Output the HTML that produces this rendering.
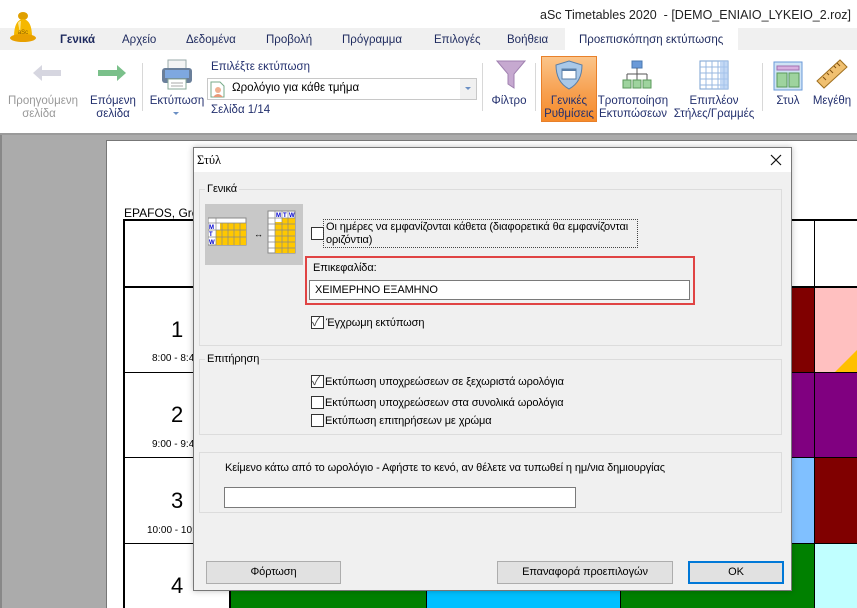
<!DOCTYPE html>
<html><head><meta charset="utf-8"><style>
*{margin:0;padding:0;box-sizing:border-box}
body{width:857px;height:608px;overflow:hidden;position:relative;font-family:"Liberation Sans","Noto Sans CJK SC",sans-serif;background:#fff}
.a{position:absolute;white-space:nowrap}
.rb{color:#23306e;font-size:11.5px;text-align:center;line-height:13px}
.d{font-family:"Liberation Sans Narrow","Liberation Sans",sans-serif;font-size:11px;letter-spacing:-0.1px;color:#000}
.cb{position:absolute;width:13px;height:13px;border:1px solid #333;background:#fff}
.grp{position:absolute;border:1px solid #dcdcdc}
.btn{position:absolute;background:#e1e1e1;border:1px solid #adadad;text-align:center;line-height:20px}
.hl{position:absolute;background:#000}
</style></head><body>
<!-- title bar -->
<div class="a" style="left:0;top:0;width:857px;height:28px;background:#fff"></div>
<div class="a" style="left:540px;top:8px;font-size:12.5px;color:#222">aSc Timetables 2020&nbsp; - [DEMO_ENIAIO_LYKEIO_2.roz]</div>
<!-- tabs -->
<div class="a" style="left:0;top:28px;width:857px;height:22px;background:#f0f0f0"></div>
<div class="a" style="left:565px;top:28px;width:173px;height:23px;background:#fff"></div>
<svg class="a" style="left:8px;top:11px" width="30" height="32" viewBox="0 0 30 32"><ellipse cx="15" cy="5" rx="5" ry="4" fill="#e0a000"/><path d="M6 26 Q6 9 15 8 Q24 9 24 26 Z" fill="#f5b800"/><ellipse cx="15" cy="27" rx="13" ry="4" fill="#e8a000"/><path d="M10 12 Q11 10 13 10 L12 22 Z" fill="#fde58a"/><text x="15" y="23" font-size="6" text-anchor="middle" fill="#8a5a00">aSc</text></svg>
<div class="a" style="top:34px;font-size:11.5px;color:#1e2a5e;left:60px;font-weight:bold">Γενικά</div>
<div class="a" style="top:34px;font-size:11.5px;color:#1e2a5e;left:122px">Αρχείο</div>
<div class="a" style="top:34px;font-size:11.5px;color:#1e2a5e;left:186px">Δεδομένα</div>
<div class="a" style="top:34px;font-size:11.5px;color:#1e2a5e;left:266px">Προβολή</div>
<div class="a" style="top:34px;font-size:11.5px;color:#1e2a5e;left:342px">Πρόγραμμα</div>
<div class="a" style="top:34px;font-size:11.5px;color:#1e2a5e;left:434px">Επιλογές</div>
<div class="a" style="top:34px;font-size:11.5px;color:#1e2a5e;left:507px">Βοήθεια</div>
<div class="a" style="top:34px;font-size:11.5px;color:#1e2a5e;left:579px">Προεπισκόπηση εκτύπωσης</div>
<!-- ribbon -->
<svg class="a" style="left:32px;top:64px" width="30" height="18"><path d="M1 9 L10 1 L10 6 L29 6 L29 12 L10 12 L10 17 Z" fill="#d6d6e0"/></svg>
<div class="a rb" style="left:8px;top:95px;width:62px;color:#999">Προηγούμενη<br>σελίδα</div>
<svg class="a" style="left:97px;top:64px" width="30" height="18"><path d="M29 9 L20 1 L20 6 L1 6 L1 12 L20 12 L20 17 Z" fill="#7ac08a"/></svg>
<div class="a rb" style="left:86px;top:95px;width:54px">Επόμενη<br>σελίδα</div>
<div class="a" style="left:142px;top:63px;width:1px;height:48px;background:#d8d8d8"></div>
<svg class="a" style="left:161px;top:59px" width="32" height="32"><rect x="7" y="1" width="18" height="10" fill="#f4f4f4" stroke="#9aa" /><rect x="1" y="9" width="30" height="15" rx="3" fill="#6a7f9a"/><rect x="4" y="11" width="24" height="8" fill="#7ea8e0"/><rect x="7" y="20" width="18" height="10" fill="#fff" stroke="#8a9"/><line x1="10" y1="24" x2="22" y2="24" stroke="#aaa"/><line x1="10" y1="27" x2="22" y2="27" stroke="#aaa"/></svg>
<div class="a rb" style="left:148px;top:95px;width:58px">Εκτύπωση</div>
<div class="a" style="left:173px;top:112px;border:3px solid transparent;border-top:3px solid #6b8fc4"></div>
<div class="a" style="left:211px;top:61px;font-size:11.5px;color:#23306e">Επιλέξτε εκτύπωση</div>
<div class="a" style="left:207px;top:78px;width:270px;height:22px;border:1px solid #c8c8c8;background:#fff"></div>
<div class="a" style="left:460px;top:79px;width:16px;height:20px;background:#f0f0f0"></div>
<div class="a" style="left:465px;top:87px;border:3px solid transparent;border-top:3px solid #6b8fc4"></div>
<svg class="a" style="left:210px;top:81px" width="16" height="17"><path d="M1 1 H10 L14 5 V16 H1 Z" fill="#fff" stroke="#7a8"/><circle cx="8" cy="9" r="3" fill="#f0b090"/><path d="M3 16 Q8 10 13 16Z" fill="#e89878"/></svg>
<div class="a" style="left:232px;top:82px;font-size:11.5px;color:#000">Ωρολόγιο για κάθε τμήμα</div>
<div class="a" style="left:211px;top:104px;font-size:11.5px;color:#23306e">Σελίδα 1/14</div>
<div class="a" style="left:482px;top:63px;width:1px;height:48px;background:#d8d8d8"></div>
<svg class="a" style="left:496px;top:60px" width="30" height="30"><path d="M1 1 H29 L18 14 V28 L12 24 V14 Z" fill="#c6a9d0" stroke="#a080b0"/></svg>
<div class="a rb" style="left:489px;top:95px;width:40px">Φίλτρο</div>
<div class="a" style="left:535px;top:63px;width:1px;height:48px;background:#d8d8d8"></div>
<div class="a" style="left:541px;top:56px;width:56px;height:66px;background:linear-gradient(#fbc58a,#f7a050 55%,#f68b2a);border:1px solid #e8802a"></div>
<svg class="a" style="left:554px;top:60px" width="30" height="30"><path d="M15 1 L28 5 Q28 22 15 29 Q2 22 2 5 Z" fill="#a9c8e8" stroke="#5a7fa8"/><rect x="8" y="9" width="14" height="10" fill="#fff" stroke="#5a7fa8"/><rect x="8" y="9" width="14" height="2" fill="#5a7fa8"/></svg>
<div class="a rb" style="left:541px;top:95px;width:56px">Γενικές<br>Ρυθμίσεις</div>
<svg class="a" style="left:622px;top:60px" width="30" height="30"><rect x="10" y="1" width="10" height="7" fill="#6a9ad8" stroke="#4a78b0"/><path d="M15 8 V14 M5 14 H25 M5 14 V20 M15 14 V20 M25 14 V20" stroke="#555" fill="none"/><rect x="1" y="20" width="8" height="8" fill="#9ed39e" stroke="#5a9a5a"/><rect x="11" y="20" width="8" height="8" fill="#9ed39e" stroke="#5a9a5a"/><rect x="21" y="20" width="8" height="8" fill="#9ed39e" stroke="#5a9a5a"/></svg>
<div class="a rb" style="left:597px;top:95px;width:72px">Τροποποίηση<br>Εκτυπώσεων</div>
<svg class="a" style="left:699px;top:60px" width="30" height="30"><rect x="1" y="1" width="28" height="28" fill="#fff" stroke="#7aa0d0"/><path d="M1 7H29M1 13H29M1 19H29M1 25H29M7 1V29M13 1V29M19 1V29M25 1V29" stroke="#9ab8e0"/><rect x="21" y="1" width="8" height="28" fill="#a9c8f0" opacity=".7"/></svg>
<div class="a rb" style="left:670px;top:95px;width:88px">Επιπλέον<br>Στήλες/Γραμμές</div>
<div class="a" style="left:762px;top:63px;width:1px;height:48px;background:#d8d8d8"></div>
<svg class="a" style="left:773px;top:61px" width="30" height="30"><rect x="1" y="1" width="28" height="28" fill="#cfe3f5" stroke="#6a9ad8"/><rect x="4" y="5" width="22" height="4" fill="#d8b0e0" stroke="#a070b0"/><rect x="4" y="12" width="10" height="14" fill="#9ed39e" stroke="#5a9a5a"/><rect x="16" y="12" width="10" height="14" fill="#9ed39e" stroke="#5a9a5a"/></svg>
<div class="a rb" style="left:772px;top:95px;width:32px">Στυλ</div>
<svg class="a" style="left:815px;top:59px" width="34" height="32"><path d="M2 22 L25 1 L32 8 L9 29 Z" fill="#f0c070" stroke="#a07020"/><path d="M8 18l3 3M12 14l2 2M15 11l3 3M19 7l2 2M22 4l3 3" stroke="#805010"/></svg>
<div class="a rb" style="left:808px;top:95px;width:48px">Μεγέθη</div>
<div class="a" style="left:0;top:133px;width:857px;height:2px;background:#9a9a9a"></div>
<!-- workspace -->
<div class="a" style="left:0;top:135px;width:857px;height:473px;background:#ababab"></div>
<div class="a" style="left:0;top:135px;width:2px;height:473px;background:#888"></div>
<div class="a" style="left:106px;top:140px;width:751px;height:468px;background:#fff;border-left:1px solid #777;border-top:1px solid #777"></div>
<div class="a" style="left:124px;top:206px;font-size:12px;color:#000">EPAFOS, Gre</div>
<div class="hl" style="left:123px;top:219px;width:734px;height:2px"></div>
<div class="hl" style="left:123px;top:219px;width:2px;height:389px"></div>
<div class="hl" style="left:229px;top:219px;width:2px;height:389px"></div>
<div class="hl" style="left:123px;top:286px;width:734px;height:2px"></div>
<div class="hl" style="left:123px;top:372px;width:734px;height:1px"></div>
<div class="hl" style="left:123px;top:457px;width:734px;height:1px"></div>
<div class="hl" style="left:123px;top:543px;width:734px;height:1px"></div>
<div class="a" style="left:171px;top:317px;font-size:22px">1</div>
<div class="a" style="left:152px;top:353px;font-size:10px">8:00 - 8:45</div>
<div class="a" style="left:171px;top:402px;font-size:22px">2</div>
<div class="a" style="left:152px;top:439px;font-size:10px">9:00 - 9:45</div>
<div class="a" style="left:171px;top:488px;font-size:22px">3</div>
<div class="a" style="left:147px;top:525px;font-size:10px">10:00 - 10:45</div>
<div class="a" style="left:171px;top:573px;font-size:22px">4</div>
<!-- right colored cells -->
<div class="a" style="left:791px;top:288px;width:23px;height:84px;background:#800000"></div>
<div class="a" style="left:815px;top:288px;width:42px;height:84px;background:#ffc0c0"></div>
<svg class="a" style="left:835px;top:350px" width="22" height="22"><path d="M22 0 V22 H0 Z" fill="#ffc000"/></svg>
<div class="a" style="left:791px;top:373px;width:23px;height:84px;background:#800080"></div>
<div class="a" style="left:815px;top:373px;width:42px;height:84px;background:#800080"></div>
<div class="a" style="left:791px;top:458px;width:23px;height:85px;background:#80c0ff"></div>
<div class="a" style="left:815px;top:458px;width:42px;height:85px;background:#800000"></div>
<div class="hl" style="left:814px;top:219px;width:1px;height:389px"></div>
<div class="a" style="left:231px;top:544px;width:195px;height:64px;background:#008000"></div>
<div class="a" style="left:426px;top:544px;width:1px;height:64px;background:#000"></div>
<div class="a" style="left:427px;top:544px;width:193px;height:64px;background:#00c0ff"></div>
<div class="a" style="left:620px;top:544px;width:1px;height:64px;background:#000"></div>
<div class="a" style="left:621px;top:544px;width:193px;height:64px;background:#008000"></div>
<div class="a" style="left:815px;top:544px;width:42px;height:64px;background:#c0ffff"></div>
<!-- dialog -->
<div class="a" style="left:193px;top:147px;width:599px;height:444px;background:#f0f0f0;border:1px solid #777;box-shadow:0 0 6px rgba(0,0,0,.25)"></div>
<div class="a" style="left:194px;top:148px;width:597px;height:24px;background:#fff"></div>
<div class="a d" style="left:197px;top:153px;font-family:'Liberation Serif',serif;font-size:12.5px">Στύλ</div>
<svg class="a" style="left:770px;top:154px" width="12" height="12"><path d="M1 1L11 11M11 1L1 11" stroke="#111" stroke-width="1.2"/></svg>
<div class="grp" style="left:199px;top:189px;width:583px;height:157px"></div>
<div class="a d" style="left:205px;top:183px;background:#f0f0f0;padding:0 2px">Γενικά</div>
<div class="a" style="left:205px;top:204px;width:98px;height:61px;background:#c8c8c8"></div>
<svg class="a" style="left:208px;top:209px" width="92" height="46">
<g transform="translate(0,9)"><rect x="0" y="0" width="38" height="27" fill="#fff" stroke="#888"/>
<rect x="8" y="5" width="30" height="22" fill="#ffc800"/><rect x="8" y="5" width="4" height="7" fill="#fff"/>
<path d="M0 5H38M0 12H38M0 19H38M8 0V27M14 5V27M20 5V27M26 5V27M32 5V27" stroke="#888" stroke-width=".7"/>
<text x="1" y="11" font-size="6" fill="#00c" font-weight="bold">M</text><text x="1" y="18" font-size="6" fill="#00c" font-weight="bold">T</text><text x="1" y="26" font-size="6" fill="#00c" font-weight="bold">W</text></g>
<text x="46" y="28" font-size="9">↔</text>
<g transform="translate(60,2)"><rect x="0" y="0" width="27" height="42" fill="#fff" stroke="#888"/><rect x="7" y="7" width="20" height="35" fill="#ffc800"/><rect x="7" y="7" width="7" height="4" fill="#fff"/>
<path d="M0 7H27M0 13H27M0 19H27M0 25H27M0 31H27M0 37H27M7 0V42M14 0V42M20 0V42" stroke="#888" stroke-width=".7"/>
<text x="8" y="6" font-size="6" fill="#00c" font-weight="bold">M</text><text x="15" y="6" font-size="6" fill="#00c" font-weight="bold">T</text><text x="21" y="6" font-size="6" fill="#00c" font-weight="bold">W</text></g>
</svg>
<div class="cb" style="left:311px;top:227px"></div>
<div class="a" style="left:323px;top:219px;width:315px;height:29px;border:1px dotted #444"></div>
<div class="a d" style="left:326px;top:221px;line-height:13px">Οι ημέρες να εμφανίζονται κάθετα (διαφορετικά θα εμφανίζονται<br>οριζόντια)</div>
<div class="a" style="left:305px;top:256px;width:390px;height:49px;border:2px solid #e04444"></div>
<div class="a d" style="left:313px;top:262px">Επικεφαλίδα:</div>
<div class="a" style="left:309px;top:280px;width:381px;height:20px;background:#fff;border:1px solid #7a7a7a"></div>
<div class="a d" style="left:315px;top:284px">ΧΕΙΜΕΡΗΝΟ ΕΞΑΜΗΝΟ</div>
<div class="cb" style="left:311px;top:316px"></div>
<div class="a" style="left:312px;top:313px;font-size:12px;color:#444">✓</div>
<div class="a d" style="left:326px;top:317px">Έγχρωμη εκτύπωση</div>
<div class="grp" style="left:199px;top:359px;width:583px;height:76px"></div>
<div class="a d" style="left:205px;top:353px;background:#f0f0f0;padding:0 2px">Επιτήρηση</div>
<div class="cb" style="left:311px;top:375px"></div><div class="a" style="left:312px;top:372px;font-size:12px;color:#444">✓</div>
<div class="a d" style="left:325px;top:376px">Εκτύπωση υποχρεώσεων σε ξεχωριστά ωρολόγια</div>
<div class="cb" style="left:311px;top:396px"></div>
<div class="a d" style="left:325px;top:397px">Εκτύπωση υποχρεώσεων στα συνολικά ωρολόγια</div>
<div class="cb" style="left:311px;top:414px"></div>
<div class="a d" style="left:325px;top:415px">Εκτύπωση επιτηρήσεων με χρώμα</div>
<div class="grp" style="left:199px;top:452px;width:583px;height:61px"></div>
<div class="a d" style="left:225px;top:462px">Κείμενο κάτω από το ωρολόγιο - Αφήστε το κενό, αν θέλετε να τυπωθεί η ημ/νια δημιουργίας</div>
<div class="a" style="left:224px;top:487px;width:352px;height:21px;background:#fff;border:1px solid #7a7a7a"></div>
<div class="btn d" style="left:206px;top:561px;width:135px;height:23px">Φόρτωση</div>
<div class="btn d" style="left:497px;top:561px;width:176px;height:23px">Επαναφορά προεπιλογών</div>
<div class="btn d" style="left:688px;top:561px;width:96px;height:23px;border:2px solid #0078d7;line-height:19px">OK</div>
</body></html>
